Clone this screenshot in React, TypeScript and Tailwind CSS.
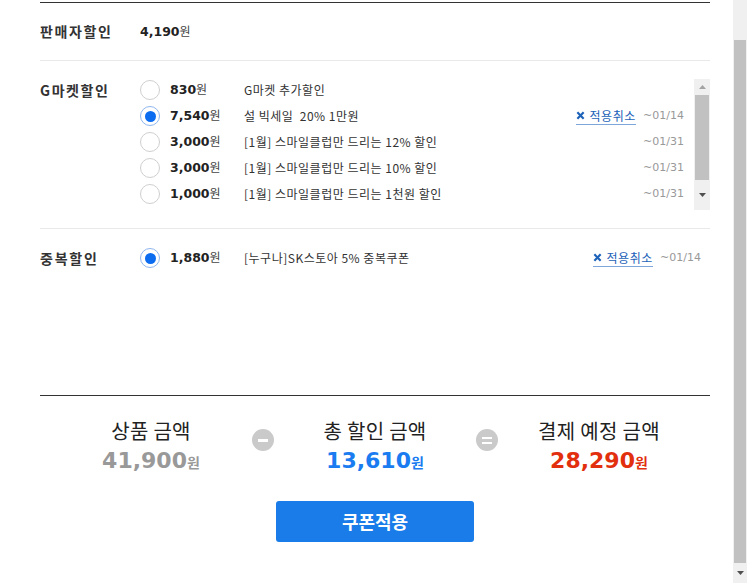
import React from 'react';

const KR = "font-['Noto_Sans_CJK_KR','Noto_Sans',sans-serif]";
const NUM = "font-['DejaVu_Sans','Noto_Sans_CJK_KR',sans-serif]";

interface Coupon {
    price: string;
    title: string;
    until: string;
    selected?: boolean;
}

const gmarketCoupons: Coupon[] = [
    { price: '830', title: 'G마켓 추가할인', until: '' },
    { price: '7,540', title: '설 빅세일  20% 1만원', until: '~01/14', selected: true },
    { price: '3,000', title: '[1월] 스마일클럽만 드리는 12% 할인', until: '~01/31' },
    { price: '3,000', title: '[1월] 스마일클럽만 드리는 10% 할인', until: '~01/31' },
    { price: '1,000', title: '[1월] 스마일클럽만 드리는 1천원 할인', until: '~01/31' }
];

const Radio = ({ checked }: { checked?: boolean }) => (
    <span
        className={
            checked
                ? 'flex h-[20px] w-[20px] shrink-0 items-center justify-center rounded-full border border-[#8fb6ee] bg-white'
                : 'flex h-[20px] w-[20px] shrink-0 items-center justify-center rounded-full border border-[#cfcfcf] bg-white'
        }
    >
        {checked && <span className="h-[11px] w-[11px] rounded-full bg-[#0b6cf0]" />}
    </span>
);

const CancelLink = () => (
    <span className={`flex items-center gap-[4px] border-b border-[#7ea6db] pb-[1px] text-[12px] leading-[15px] tracking-[0.6px] text-[#1c62b9] ${KR}`}>
        <svg width="9" height="9" viewBox="0 0 10 10">
            <path d="M1.5 1.5l7 7M8.5 1.5l-7 7" stroke="#1c62b9" strokeWidth="2.4" />
        </svg>
        적용취소
    </span>
);

const CouponRow = ({ c }: { c: Coupon }) => (
    <div className="flex h-[26px] items-center">
        <Radio checked={c.selected} />
        <span className={`ml-[10px] w-[74px] shrink-0 text-[12.5px] font-bold text-[#222] ${NUM}`}>
            {c.price}
            <span className={`text-[12px] font-normal text-[#444] ${KR}`}>원</span>
        </span>
        <span className={`flex-1 whitespace-pre text-[12px] tracking-[0.5px] text-[#333] ${KR}`}>{c.title}</span>
        {c.selected && <CancelLink />}
        <span className={`ml-[7px] w-[40px] text-right text-[11px] text-[#999] ${NUM}`}>{c.until}</span>
    </div>
);

const Scrollbar = ({ className, thumbTop, thumbBottom }: { className: string; thumbTop: string; thumbBottom: string }) => (
    <div className={`flex flex-col bg-[#f0f0f0] ${className}`}>
        <div className={`flex items-center justify-center ${thumbTop}`}>
            <svg width="7" height="4" viewBox="0 0 7 4"><path d="M0 4L3.5 0 7 4z" fill="#a3a3a3" /></svg>
        </div>
        <div className="mx-[1px] flex-1 bg-[#c1c1c1]" />
        <div className={`flex items-center justify-center ${thumbBottom}`}>
            <svg width="7" height="4" viewBox="0 0 7 4"><path d="M0 0L3.5 4 7 0z" fill="#505050" /></svg>
        </div>
    </div>
);

const Operator = ({ kind }: { kind: 'minus' | 'equals' }) => (
    <div className="flex w-[44px] justify-center pt-[11px]">
        <span className="flex h-[22px] w-[22px] flex-col items-center justify-center gap-[3px] rounded-full bg-[#cacaca]">
            {kind === 'minus' ? (
                <span className="h-[3px] w-[10px] bg-white" />
            ) : (
                <>
                    <span className="h-[2px] w-[10px] bg-white" />
                    <span className="h-[2px] w-[10px] bg-white" />
                </>
            )}
        </span>
    </div>
);

const Total = ({ label, value, color }: { label: string; value: string; color: string }) => (
    <div className="flex w-[180px] flex-col items-center">
        <span className={`text-[20px] leading-[26px] tracking-[0.3px] text-[#222] ${KR}`}>{label}</span>
        <span className={`mt-[3px] text-[22px] font-bold leading-[28px] ${NUM} ${color}`}>
            {value}
            <span className={`text-[14px] ${KR}`}>원</span>
        </span>
    </div>
);

export default function App() {
    return (
        <div className="flex h-[583px] w-[747px] overflow-hidden bg-white">
            <div className="flex-1 pl-[40px] pr-[23px]">
                <div className="mt-[2px] border-t border-[#333]" />

                <div className="flex h-[58px] items-center border-b border-[#e9e9e9]">
                    <span className={`w-[100px] text-[14px] font-bold tracking-[1.6px] text-[#333] ${KR}`}>판매자할인</span>
                    <span className={`text-[12.5px] font-bold text-[#222] ${NUM}`}>
                        4,190<span className={`text-[12px] font-normal text-[#444] ${KR}`}>원</span>
                    </span>
                </div>

                <div className="flex border-b border-[#e9e9e9] pt-[16px] pb-[18px]">
                    <span className={`w-[100px] pt-[1px] text-[14px] font-bold leading-[24px] tracking-[1.6px] text-[#333] ${KR}`}>G마켓할인</span>
                    <div className="flex-1 pr-[11px]">
                        {gmarketCoupons.map((c, i) => (
                            <CouponRow key={i} c={c} />
                        ))}
                    </div>
                    <Scrollbar className="mt-[2px] h-[131px] w-[16px]" thumbTop="h-[16px]" thumbBottom="h-[30px]" />
                </div>

                <div className="h-[167px] border-b border-[#333] pt-[16px]">
                    <div className="flex">
                        <span className={`w-[100px] text-[14px] font-bold leading-[26px] tracking-[1.8px] text-[#333] ${KR}`}>중복할인</span>
                        <div className="flex-1 pr-[10px]">
                            <CouponRow c={{ price: '1,880', title: '[누구나]SK스토아 5% 중복쿠폰', until: '~01/14', selected: true }} />
                        </div>
                    </div>
                </div>

                <div className="flex justify-center pt-[22px]">
                    <Total label="상품 금액" value="41,900" color="text-[#999]" />
                    <Operator kind="minus" />
                    <Total label="총 할인 금액" value="13,610" color="text-[#1a7cf0]" />
                    <Operator kind="equals" />
                    <Total label="결제 예정 금액" value="28,290" color="text-[#e2300f]" />
                </div>

                <div className="mt-[25px] flex justify-center">
                    <button className={`h-[41px] w-[198px] rounded-[3px] bg-[#1a7ce9] text-[18px] font-bold text-white ${KR}`}>
                        쿠폰적용
                    </button>
                </div>
            </div>
            <Scrollbar className="w-[14px]" thumbTop="h-[40px] opacity-0" thumbBottom="h-[20px]" />
        </div>
    );
}
